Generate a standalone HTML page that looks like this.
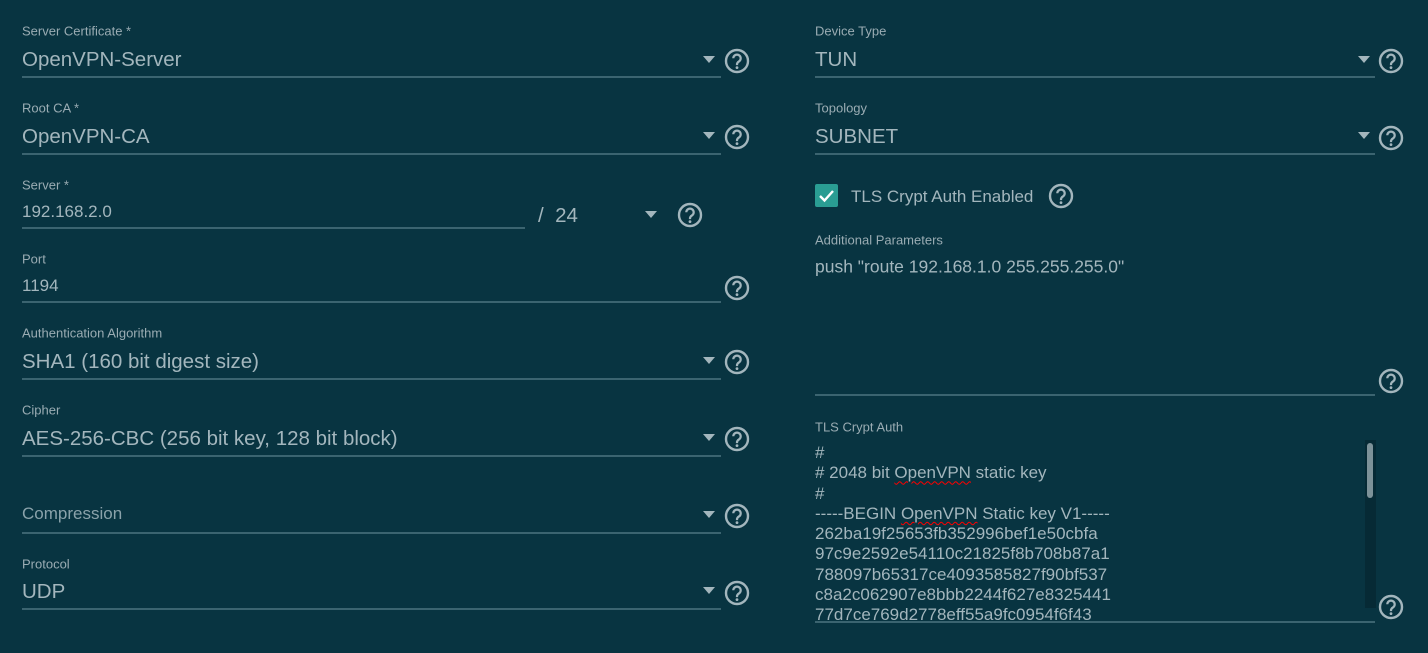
<!DOCTYPE html>
<html><head><meta charset="utf-8"><style>
body{margin:0;width:1428px;height:653px;background:#083441;overflow:hidden;font-family:"Liberation Sans",sans-serif;position:relative}
.a{position:absolute;white-space:nowrap}
.lb{font-size:13px;color:#9aacb3;transform:translateY(-50%)}
.v{font-size:20.5px;color:#a3b6bd;transform:translateY(-50%);margin-top:1px}
.vs{font-size:17px;color:#a3b6bd;transform:translateY(-50%);margin-top:1px}
.u{position:absolute;height:2px;background:#3b6470}
.ar{position:absolute;width:0;height:0;border-left:6px solid transparent;border-right:6px solid transparent;border-top:7px solid #a3b6bd}
.h{position:absolute;width:26px;height:26px}
.ta{font-size:17px;color:#a3b6bd;line-height:20.3px}
.sq{text-decoration:underline wavy red;text-decoration-thickness:1px;text-underline-offset:2px}
</style></head><body>
<svg width="0" height="0" style="position:absolute"><defs><symbol id="q" viewBox="0 0 26 26"><circle cx="13" cy="13" r="11" fill="none" stroke="#a3b6bd" stroke-width="2.4"/><path d="M9.3 10.3a3.7 3.7 0 1 1 5.6 3.2c-1.3.8-1.9 1.5-1.9 3v.6" fill="none" stroke="#a3b6bd" stroke-width="2.2"/><circle cx="13" cy="19.6" r="1.4" fill="#a3b6bd"/></symbol></defs></svg>

<!-- left column -->
<div class="a lb" style="left:22px;top:31px">Server Certificate *</div>
<div class="a v" style="left:22px;top:59px">OpenVPN-Server</div>
<div class="u" style="left:22px;top:76px;width:699px"></div>
<div class="ar" style="left:703px;top:56px"></div>
<svg class="h" style="left:724px;top:48px"><use href="#q"/></svg>

<div class="a lb" style="left:22px;top:108px">Root CA *</div>
<div class="a v" style="left:22px;top:136px">OpenVPN-CA</div>
<div class="u" style="left:22px;top:153px;width:699px"></div>
<div class="ar" style="left:703px;top:132px"></div>
<svg class="h" style="left:724px;top:124px"><use href="#q"/></svg>

<div class="a lb" style="left:22px;top:185px">Server *</div>
<div class="a vs" style="left:22px;top:211px">192.168.2.0</div>
<div class="u" style="left:22px;top:227px;width:503px"></div>
<div class="a v" style="left:538px;top:215px">/&nbsp;&nbsp;24</div>
<div class="ar" style="left:645px;top:211px"></div>
<svg class="h" style="left:677px;top:202px"><use href="#q"/></svg>

<div class="a lb" style="left:22px;top:259px">Port</div>
<div class="a vs" style="left:22px;top:285px">1194</div>
<div class="u" style="left:22px;top:301px;width:699px"></div>
<svg class="h" style="left:724px;top:275px"><use href="#q"/></svg>

<div class="a lb" style="left:22px;top:333px">Authentication Algorithm</div>
<div class="a v" style="left:22px;top:361px">SHA1 (160 bit digest size)</div>
<div class="u" style="left:22px;top:378px;width:699px"></div>
<div class="ar" style="left:703px;top:357px"></div>
<svg class="h" style="left:724px;top:349px"><use href="#q"/></svg>

<div class="a lb" style="left:22px;top:410px">Cipher</div>
<div class="a v" style="left:22px;top:438px">AES-256-CBC (256 bit key, 128 bit block)</div>
<div class="u" style="left:22px;top:455px;width:699px"></div>
<div class="ar" style="left:703px;top:434px"></div>
<svg class="h" style="left:724px;top:426px"><use href="#q"/></svg>

<div class="a vs" style="left:22px;top:513px;color:#8aa2aa">Compression</div>
<div class="u" style="left:22px;top:532px;width:699px"></div>
<div class="ar" style="left:703px;top:511px"></div>
<svg class="h" style="left:724px;top:503px"><use href="#q"/></svg>

<div class="a lb" style="left:22px;top:564px">Protocol</div>
<div class="a v" style="left:22px;top:591px">UDP</div>
<div class="u" style="left:22px;top:608px;width:699px"></div>
<div class="ar" style="left:703px;top:587px"></div>
<svg class="h" style="left:724px;top:580px"><use href="#q"/></svg>

<!-- right column -->
<div class="a lb" style="left:815px;top:31px">Device Type</div>
<div class="a v" style="left:815px;top:59px">TUN</div>
<div class="u" style="left:815px;top:76px;width:560px"></div>
<div class="ar" style="left:1358px;top:56px"></div>
<svg class="h" style="left:1378px;top:48px"><use href="#q"/></svg>

<div class="a lb" style="left:815px;top:108px">Topology</div>
<div class="a v" style="left:815px;top:136px">SUBNET</div>
<div class="u" style="left:815px;top:153px;width:560px"></div>
<div class="ar" style="left:1358px;top:132px"></div>
<svg class="h" style="left:1378px;top:125px"><use href="#q"/></svg>

<div style="position:absolute;left:815px;top:184px;width:23px;height:23px;background:#2a9d93;border-radius:2px"><svg width="23" height="23"><path d="M5 12l4.5 4.5L18 7" fill="none" stroke="#fff" stroke-width="2.4"/></svg></div>
<div class="a vs" style="left:851px;top:196px">TLS Crypt Auth Enabled</div>
<svg class="h" style="left:1048px;top:183px"><use href="#q"/></svg>

<div class="a lb" style="left:815px;top:240px">Additional Parameters</div>
<div class="a vs" style="left:815px;top:266px;font-size:17.5px">push "route 192.168.1.0 255.255.255.0"</div>
<div class="u" style="left:815px;top:394px;width:560px"></div>
<svg class="h" style="left:1378px;top:368px"><use href="#q"/></svg>

<div class="a lb" style="left:815px;top:427px">TLS Crypt Auth</div>
<div class="a ta" style="left:815px;top:443px;height:178px;overflow:hidden">#<br># 2048 bit <span class="sq">OpenVPN</span> static key<br>#<br>-----BEGIN <span class="sq">OpenVPN</span> Static key V1-----<br>262ba19f25653fb352996bef1e50cbfa<br>97c9e2592e54110c21825f8b708b87a1<br>788097b65317ce4093585827f90bf537<br>c8a2c062907e8bbb2244f627e8325441<br>77d7ce769d2778eff55a9fc0954f6f43</div>
<div style="position:absolute;left:1365px;top:440px;width:11px;height:168px;background:#062a35"></div>
<div style="position:absolute;left:1367px;top:443px;width:6px;height:55px;background:#7d9299;border-radius:3px"></div>
<div class="u" style="left:815px;top:621px;width:560px"></div>
<svg class="h" style="left:1378px;top:594px"><use href="#q"/></svg>
</body></html>
